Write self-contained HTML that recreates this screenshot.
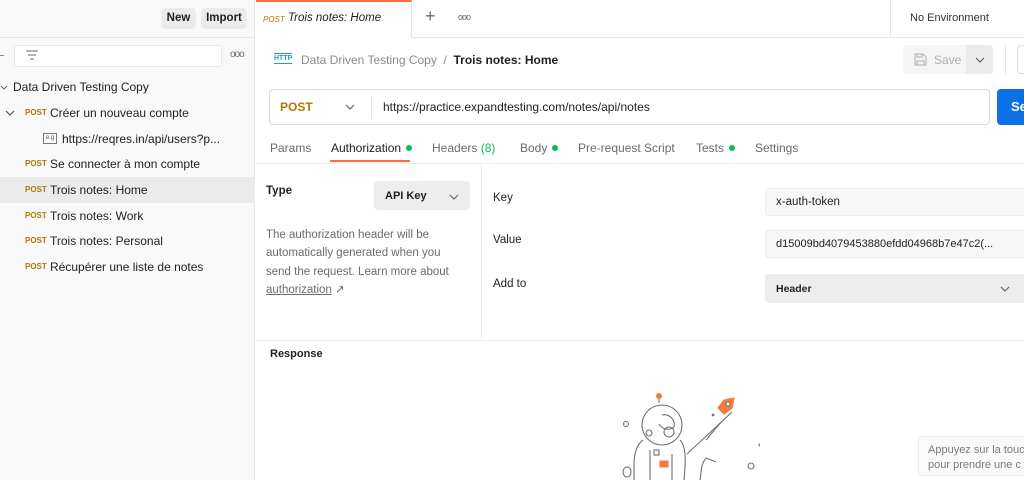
<!DOCTYPE html>
<html><head><meta charset="utf-8"><style>
*{box-sizing:border-box;margin:0;padding:0}
body{width:1024px;height:480px;overflow:hidden;font-family:"Liberation Sans",sans-serif;font-size:12px;color:#212121;background:#fff;position:relative}
.a{position:absolute;white-space:nowrap}
.post{color:#ad7a03;font-size:8px;font-weight:bold}
.side{left:0;top:0;width:255px;height:480px;background:#f9f9f9;border-right:1px solid #e6e6e6}
.btn{background:#ebebeb;border-radius:4px;font-weight:bold;font-size:11.5px;text-align:center;line-height:21px;height:21px;top:8px}
.row{left:0;width:255px;height:26px;line-height:26px}
.row span.t{font-size:12px;color:#212121}
.gray{color:#6b6b6b}
.dot{display:inline-block;width:6px;height:6px;border-radius:50%;background:#0cbb52;margin-left:5px;vertical-align:1px}
.inp{background:#f7f7f7;border:1px solid #ededed;border-radius:4px;padding-left:10px;font-size:11.5px}
.chev{position:absolute}
</style></head><body>
<div class="a side"></div>
<div class="a" style="left:0;top:37px;width:255px;height:1px;background:#e6e6e6"></div>
<div class="a btn" style="left:161px;width:35px">New</div>
<div class="a btn" style="left:201px;width:46px">Import</div>
<div class="a" style="left:0;top:55px;width:4px;height:1px;background:#888"></div>
<div class="a" style="left:14px;top:45px;width:208px;height:22px;border:1px solid #e6e6e6;border-radius:3px;background:#fff"></div>
<svg class="a" style="left:25px;top:49px" width="14" height="12"><path d="M1 2h12M3 6h8M5 10h4" stroke="#888" stroke-width="1.2"/></svg>
<div class="a gray" style="left:230px;top:49px;font-size:10px;letter-spacing:-1px">ooo</div>
<svg class="a" style="left:0;top:84px" width="8" height="8"><path d="M1 2l3 3 3-3" stroke="#666" fill="none"/></svg>
<div class="a row" style="top:74px"><span class="a t" style="left:13px">Data Driven Testing Copy</span></div>
<svg class="a" style="left:5px;top:109px" width="10" height="8"><path d="M1 2l4 4 4-4" stroke="#555" fill="none" stroke-width="1.2"/></svg>
<div class="a row" style="top:100px"><span class="a post" style="left:25px">POST</span><span class="a t" style="left:50px">Créer un nouveau compte</span></div>
<div class="a row" style="top:126px"><span class="a" style="left:43px;top:7px;width:14px;height:11px;border:1px solid #777;font-size:6px;line-height:9px;text-align:center;color:#555">e.g</span><span class="a t" style="left:62px">https://reqres.in/api/users?p...</span></div>
<div class="a row" style="top:151px"><span class="a post" style="left:25px">POST</span><span class="a t" style="left:50px">Se connecter à mon compte</span></div>
<div class="a row" style="top:177px;background:#ebebeb"><span class="a post" style="left:25px">POST</span><span class="a t" style="left:50px">Trois notes: Home</span></div>
<div class="a row" style="top:203px"><span class="a post" style="left:25px">POST</span><span class="a t" style="left:50px">Trois notes: Work</span></div>
<div class="a row" style="top:228px"><span class="a post" style="left:25px">POST</span><span class="a t" style="left:50px">Trois notes: Personal</span></div>
<div class="a row" style="top:254px"><span class="a post" style="left:25px">POST</span><span class="a t" style="left:50px">Récupérer une liste de notes</span></div>

<div class="a" style="left:256px;top:37px;width:768px;height:1px;background:#e6e6e6"></div>
<div class="a" style="left:256px;top:0;width:156px;height:38px;background:#fff;border-top:2px solid #ff6c37;border-right:1px solid #e6e6e6"></div>
<div class="a post" style="left:263px;top:15px;font-style:italic;font-weight:normal">POST</div>
<div class="a" style="left:288px;top:12px;font-style:italic;font-size:11.5px">Trois notes: Home</div>
<div class="a gray" style="left:425px;top:6px;font-size:18px;font-weight:300">+</div>
<div class="a gray" style="left:458px;top:12px;font-size:9px;letter-spacing:-1px">ooo</div>
<div class="a" style="left:890px;top:0;width:1px;height:37px;background:#e6e6e6"></div>
<div class="a" style="left:910px;top:12px;font-size:11px;color:#333">No Environment</div>

<div class="a" style="left:274px;top:53px;font-size:7px;font-weight:bold;color:#2a9bb5;border-top:1px solid #2a9bb5;border-bottom:1px solid #2a9bb5;line-height:9px">HTTP</div>
<div class="a" style="left:301px;top:53px;font-size:12px;color:#8a8a8a">Data Driven Testing Copy &nbsp;/&nbsp; <b style="color:#212121">Trois notes: Home</b></div>
<div class="a" style="left:903px;top:45px;width:90px;height:29px;background:#f5f5f5;border-radius:4px"></div>
<div class="a" style="left:966px;top:45px;width:27px;height:29px;background:#ebebeb;border-radius:0 4px 4px 0"></div>
<svg class="a" style="left:975px;top:56px" width="10" height="8"><path d="M1 2l4 4 4-4" stroke="#666" fill="none" stroke-width="1.2"/></svg>
<svg class="a" style="left:914px;top:53px" width="13" height="13"><path d="M1 1h8l3 3v8H1z M3 1v3h5V1 M3 12V8h7v4" fill="none" stroke="#bbb" stroke-width="1.2"/></svg>
<div class="a" style="left:934px;top:53px;color:#b0b0b0">Save</div>
<div class="a" style="left:1005px;top:45px;width:1px;height:29px;background:#e6e6e6"></div>
<div class="a" style="left:1017px;top:45px;width:20px;height:29px;border:1px solid #ddd;border-radius:4px"></div>

<div class="a" style="left:269px;top:89px;width:721px;height:36px;border:1px solid #d9d9d9;border-radius:4px"></div>
<div class="a" style="left:280px;top:100px;font-weight:bold;color:#ad7a03;font-size:12px">POST</div>
<svg class="a" style="left:345px;top:103px" width="10" height="8"><path d="M1 2l4 4 4-4" stroke="#666" fill="none" stroke-width="1.2"/></svg>
<div class="a" style="left:371px;top:95px;width:1px;height:24px;background:#e6e6e6"></div>
<div class="a" style="left:383px;top:100px;font-size:12px">https://practice.expandtesting.com/notes/api/notes</div>
<div class="a" style="left:997px;top:89px;width:40px;height:36px;background:#0c71e6;border-radius:4px;color:#fff;font-weight:bold;font-size:13px;padding:10px 0 0 14px">Se</div>

<div class="a gray" style="left:270px;top:141px;font-size:12px">Params</div>
<div class="a" style="left:331px;top:141px;font-size:12px">Authorization<span class="dot"></span></div>
<div class="a" style="left:330px;top:160px;width:80px;height:2px;background:#ff6c37"></div>
<div class="a gray" style="left:432px;top:141px">Headers <span style="color:#0cbb52">(8)</span></div>
<div class="a gray" style="left:520px;top:141px">Body<span class="dot"></span></div>
<div class="a gray" style="left:578px;top:141px">Pre-request Script</div>
<div class="a gray" style="left:696px;top:141px">Tests<span class="dot"></span></div>
<div class="a gray" style="left:755px;top:141px">Settings</div>
<div class="a" style="left:256px;top:163px;width:768px;height:1px;background:#ececec"></div>

<div class="a" style="left:266px;top:185px;font-weight:bold;font-size:11.5px">Type</div>
<div class="a" style="left:374px;top:181px;width:96px;height:29px;background:#ededed;border-radius:4px;font-weight:bold;font-size:11px;padding:9px 0 0 11px">API Key</div>
<svg class="a" style="left:449px;top:193px" width="10" height="8"><path d="M1 2l4 4 4-4" stroke="#666" fill="none" stroke-width="1.2"/></svg>
<div class="a gray" style="left:266px;top:226px;font-size:11.5px;line-height:18.3px;white-space:normal;width:200px">The authorization header will be automatically generated when you send the request. Learn more about <span style="text-decoration:underline">authorization</span> ↗</div>
<div class="a" style="left:481px;top:164px;width:1px;height:175px;background:#ececec"></div>
<div class="a" style="left:493px;top:192px;font-size:11.5px">Key</div>
<div class="a inp" style="left:765px;top:188px;width:262px;height:28px;padding-top:7px">x-auth-token</div>
<div class="a" style="left:493px;top:234px;font-size:11.5px">Value</div>
<div class="a inp" style="left:765px;top:230px;width:262px;height:28px;padding-top:7px;font-size:11px">d15009bd4079453880efdd04968b7e47c2(...</div>
<div class="a" style="left:493px;top:278px;font-size:11.5px">Add to</div>
<div class="a inp" style="left:765px;top:274px;width:262px;height:29px;background:#ededed;padding-top:8px;font-weight:bold;font-size:10.5px">Header</div>
<svg class="a" style="left:1000px;top:285px" width="10" height="8"><path d="M1 2l4 4 4-4" stroke="#666" fill="none" stroke-width="1.2"/></svg>
<div class="a" style="left:256px;top:340px;width:768px;height:1px;background:#ececec"></div>
<div class="a" style="left:270px;top:348px;font-weight:bold;font-size:11px">Response</div>

<svg class="a" style="left:610px;top:390px" width="150" height="90" fill="none" stroke="#707070" stroke-width="1.1">
<circle cx="49" cy="6" r="3" fill="#f07d3c" stroke="none"/>
<line x1="49" y1="9" x2="49" y2="13"/>
<circle cx="52" cy="35" r="20"/>
<path d="M52 25a10 10 0 0 1 12 12a10 10 0 0 1 -15 -3"/>
<circle cx="59" cy="42" r="5"/>
<circle cx="39" cy="43" r="3"/>
<circle cx="16" cy="34" r="2.5"/>
<path d="M33 50c-6 4-9 14-9 24v16M70 50c6 6 6 20 4 40M40 60v30M62 64v26"/>
<rect x="44" y="60" width="5" height="5"/>
<path d="M50 71h8v6h-8z" fill="#f07d3c" stroke="#f07d3c"/>
<path d="M77 64l45-42M96 50c4-4 10-14 24-26M90 90c2-10 0-14 6-22l10 4"/>
<path d="M114 10l10-2-2 10-8 6-6-6z" fill="#f07d3c" stroke="#f07d3c"/>
<circle cx="118" cy="14" r="2" fill="#fff"/>
<circle cx="103" cy="25" r="0.8" fill="#707070"/>
<circle cx="150" cy="55" r="1"/>
<circle cx="141" cy="76" r="3"/>
<ellipse cx="17" cy="82" rx="4" ry="5"/>
</svg>

<div class="a" style="left:918px;top:436px;width:120px;height:40px;background:#fafafa;border:1px solid #eee;border-radius:4px;color:#7a7a7a;font-size:11px;line-height:15px;padding:6px 0 0 9px">Appuyez sur la touc<br>pour prendre une c</div>
</body></html>
